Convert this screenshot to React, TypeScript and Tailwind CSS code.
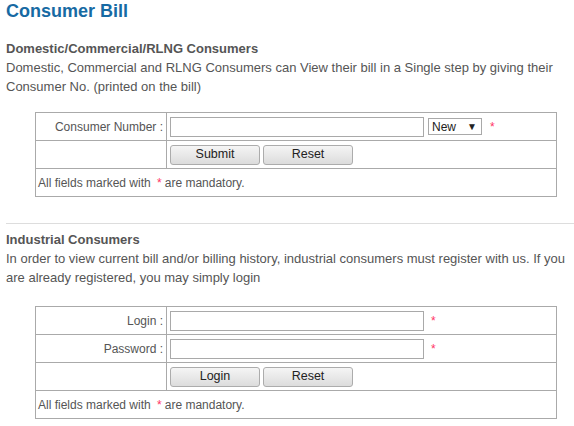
import type { ReactNode } from 'react'

const border = 'border-[#aaaaaa]'

function Star() {
  return <span className="text-[#ff3366] text-[12px] self-start mt-[2px]">*</span>
}

function Row({ label, children }: { label?: string; children: ReactNode }) {
  return (
    <div className={`flex h-[28px] border-b ${border}`}>
      <div className={`w-[131px] flex-shrink-0 border-r ${border} flex items-center justify-end pr-[3px] text-[12px]`}>
        {label}
      </div>
      <div className="flex items-center pl-[3px]">{children}</div>
    </div>
  )
}

function TextInput() {
  return <input type="text" className="w-[254px] h-[20px] border border-[#a9a9a9] bg-white px-1 outline-none" />
}

function Btn({ children }: { children: ReactNode }) {
  return (
    <button className="w-[90px] h-[20px] rounded-[3px] border border-[#acacac] bg-gradient-to-b from-[#f5f5f5] to-[#dcdcdc] text-[12.5px] leading-none text-[#222]">
      {children}
    </button>
  )
}

function Mandatory() {
  return (
    <div className="h-[27px] flex items-center pl-[2px] text-[12px]">
      All fields marked with&nbsp; <span className="text-[#ff3366] mx-[3px]">*</span> are mandatory.
    </div>
  )
}

export default function App() {
  return (
    <div className="w-[574px] h-[426px] overflow-hidden bg-white font-['Liberation_Sans',Arial,sans-serif] text-[13px] text-[#555]">
      <div className="pl-[6px]">
        {/* Title */}
        <h1 className="text-[18px] font-bold leading-[22px] text-[#176aa3]">Consumer Bill</h1>

        {/* Domestic */}
        <h2 className="mt-[17px] font-bold leading-[19px]">Domestic/Commercial/RLNG Consumers</h2>
        <p className="leading-[19px]">
          Domestic, Commercial and RLNG Consumers can View their bill in a Single step by giving their Consumer No. (printed on the bill)
        </p>

        <div className={`mt-[16px] ml-[29px] w-[522px] border ${border}`}>
          <Row label="Consumer Number :">
            <TextInput />
            <div className="ml-[4px] w-[54px] h-[17px] border border-[#a9a9a9] flex items-center justify-between pl-[3px] pr-[4px] text-[12px] text-[#222]">
              <span>New</span>
              <span className="text-[10px]">▼</span>
            </div>
            <span className="ml-[8px]"><Star /></span>
          </Row>
          <Row>
            <div className="flex gap-[3px]">
              <Btn>Submit</Btn>
              <Btn>Reset</Btn>
            </div>
          </Row>
          <Mandatory />
        </div>

        <div className="mt-[26px] h-px bg-[#dddddd]" />

        {/* Industrial */}
        <h2 className="mt-[6px] font-bold leading-[19px]">Industrial Consumers</h2>
        <p className="leading-[19px] mr-[-6px]">
          In order to view current bill and/or billing history, industrial consumers must register with us. If you are already registered, you may simply login
        </p>

        <div className={`mt-[19px] ml-[29px] w-[522px] border ${border}`}>
          <Row label="Login :">
            <TextInput />
            <span className="ml-[7px]"><Star /></span>
          </Row>
          <Row label="Password :">
            <TextInput />
            <span className="ml-[7px]"><Star /></span>
          </Row>
          <Row>
            <div className="flex gap-[3px]">
              <Btn>Login</Btn>
              <Btn>Reset</Btn>
            </div>
          </Row>
          <Mandatory />
        </div>
      </div>
    </div>
  )
}
